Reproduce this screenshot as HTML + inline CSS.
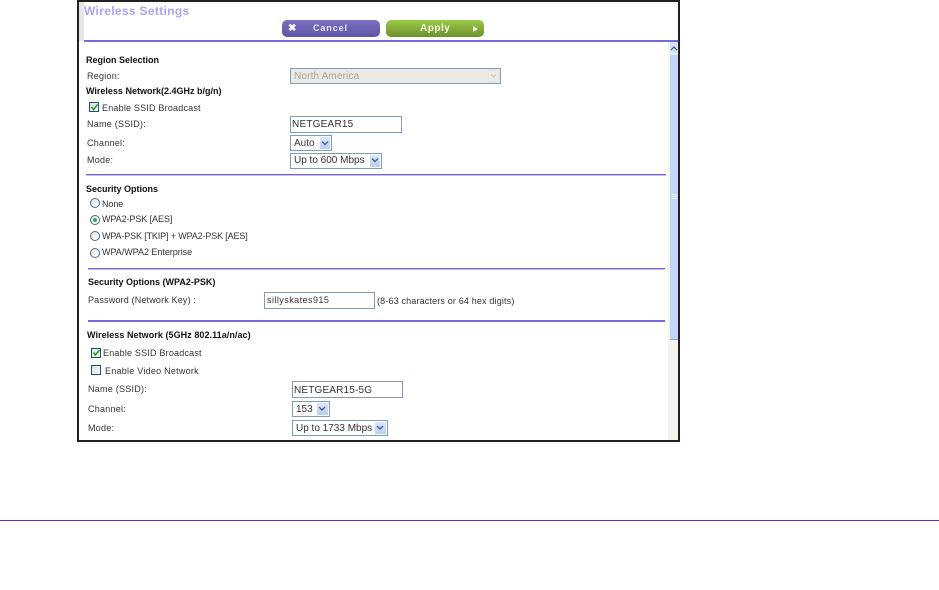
<!DOCTYPE html>
<html><head><meta charset="utf-8">
<style>
html,body{margin:0;padding:0;background:#fff}
body{width:939px;height:590px;overflow:hidden;position:relative;font-family:"Liberation Sans",sans-serif}
div,span.a{position:absolute;box-sizing:border-box}
.t{font-size:9px;line-height:12px;height:12px;color:#333;white-space:nowrap;letter-spacing:.25px}
.s{letter-spacing:-.08px}
.b{font-size:9px;line-height:12px;height:12px;color:#111;font-weight:bold;white-space:nowrap;letter-spacing:0}
.l{background:linear-gradient(#6f63dc 0,#6f63dc 50%,#c4bff2 50%,#c4bff2 100%)}
.i{border:1px solid #7f9db9;background:#fff;font-size:10px;color:#333;white-space:nowrap;padding-left:3px;letter-spacing:0}
.ar{background:linear-gradient(#dbe6fb,#b9cdf6);border:1px solid #fff;outline:0}
.cb{width:10px;height:10px;border:1px solid #1c5180;background:linear-gradient(135deg,#dcdcd7,#fff)}
.rd{width:10px;height:10px;border:1px solid #4a6a90;border-radius:50%;background:linear-gradient(135deg,#e4e4de,#fff)}
svg{position:absolute;left:0;top:0}
</style></head><body>
<div style="left:77px;top:0;width:603px;height:442px;border:2px solid #231f20"></div>
<div style="left:79px;top:2px;width:5px;height:39px;background:#e6e6e6"></div>

<div style="left:84px;top:4px;font-size:12px;line-height:14px;font-weight:bold;color:#aba4f2;white-space:nowrap;letter-spacing:.33px">Wireless Settings</div>

<div style="left:282px;top:20px;width:98px;height:17px;border-radius:5px;background:linear-gradient(#7a70c0,#5f56a6);color:#e9e8f6;font-size:9px;font-weight:bold;line-height:17px;letter-spacing:.9px;padding-left:31px">Cancel</div>
<div style="left:288px;top:23px;color:#fff;font-size:10px;font-weight:bold;line-height:11px">✖</div>
<div style="left:386px;top:20px;width:98px;height:17px;border-radius:5px;background:linear-gradient(#9bcb45,#6d8f30);color:#f1f6e4;font-size:10px;font-weight:bold;line-height:17px;letter-spacing:.5px;padding-left:34px">Apply</div>
<div style="left:473px;top:26px;width:0;height:0;border-left:5px solid #eef5dd;border-top:3px solid transparent;border-bottom:3px solid transparent"></div>

<div class="l" style="left:84px;top:40px;width:594px;height:2px;background:#7468dc"></div>

<!-- scrollbar -->
<div style="left:668px;top:42px;width:10px;height:398px;background:#f4f3ee"></div>
<div style="left:670px;top:42px;width:8px;height:298px;background:#c3d5fb"></div>
<div style="left:670px;top:42px;width:8px;height:11px;background:#d5e2fb"></div>
<div style="left:670px;top:53px;width:8px;height:2px;background:#eef3fd"></div>
<div style="left:670px;top:339px;width:8px;height:1px;background:#8aa5cf"></div>
<div style="left:672px;top:194px;width:5px;height:1px;background:#eef3fd"></div>
<div style="left:672px;top:196px;width:5px;height:1px;background:#eef3fd"></div>
<div style="left:672px;top:198px;width:5px;height:1px;background:#eef3fd"></div>
<svg width="939" height="590" style="z-index:2;pointer-events:none">
<path d="M671 50 L674 47 L677 50" fill="none" stroke="#4d6185" stroke-width="1.3"/>
<path d="M91.500 107 L93.500 109.500 L97.500 104.500" fill="none" stroke="#21a121" stroke-width="1.6"/>
<path d="M93.500 352.500 L95.500 355 L99.500 350" fill="none" stroke="#21a121" stroke-width="1.6"/>
</svg>

<div class="b" style="left:86px;top:54px">Region Selection</div>
<div class="t" style="left:87px;top:70px">Region:</div>
<div style="left:290px;top:68px;width:211px;height:16px;border:1px solid #7f9db9;background:#ebe9e3;color:#a5a59e;font-size:10px;line-height:15px;padding-left:3px;letter-spacing:.15px">North America</div>
<div style="left:488px;top:70px;width:11px;height:12px;background:#eeece6;border:1px solid #e4e2dc"></div>
<svg width="939" height="590" style="z-index:2"><path d="M491 74.500 L493.500 77 L496 74.500" fill="none" stroke="#c9c8c0" stroke-width="1.4"/></svg>

<div class="b" style="left:86px;top:85px">Wireless Network(2.4GHz b/g/n)</div>
<div class="cb" style="left:89px;top:102px"></div>
<div class="t" style="left:102px;top:102px;letter-spacing:.2px">Enable SSID Broadcast</div>
<div class="t" style="left:87px;top:118px">Name (SSID):</div>
<div class="i" style="left:290px;top:116px;width:112px;height:17px;line-height:15px;padding-left:1px;letter-spacing:.22px">NETGEAR15</div>
<div class="t" style="left:87px;top:137px">Channel:</div>
<div class="i" style="left:290px;top:135px;width:42px;height:16px;line-height:15px">Auto</div>
<div class="ar" style="left:319px;top:136px;width:12px;height:14px"></div>
<div class="t" style="left:87px;top:154px">Mode:</div>
<div class="i" style="left:290px;top:153px;width:92px;height:16px;line-height:14px">Up to 600 Mbps</div>
<div class="ar" style="left:369px;top:154px;width:12px;height:14px"></div>
<svg width="939" height="590" style="z-index:2" fill="none" stroke="#4d6185" stroke-width="1.4">
<path d="M322 141.500 L325 144.500 L328 141.500"/>
<path d="M372 158.500 L375 161.500 L378 158.500"/>
<path d="M319 407 L322 410 L325 407"/>
<path d="M377 426 L380 429 L383 426"/>
</svg>

<div class="l" style="left:86px;top:174px;width:580px;height:2px"></div>

<div class="b" style="left:86px;top:183px">Security Options</div>
<div class="rd" style="left:90px;top:198px"></div>
<div class="t s" style="left:102px;top:198px">None</div>
<div class="rd" style="left:90px;top:215px"></div>
<div style="left:93px;top:218px;width:4px;height:4px;border-radius:50%;background:#2fb24a"></div>
<div class="t s" style="left:102px;top:213px">WPA2-PSK [AES]</div>
<div class="rd" style="left:90px;top:231px"></div>
<div class="t s" style="left:102px;top:230px;letter-spacing:-.14px">WPA-PSK [TKIP] + WPA2-PSK [AES]</div>
<div class="rd" style="left:90px;top:248px"></div>
<div class="t s" style="left:102px;top:246px;letter-spacing:-.03px">WPA/WPA2 Enterprise</div>

<div class="l" style="left:88px;top:268px;width:577px;height:2px"></div>

<div class="b" style="left:88px;top:276px">Security Options (WPA2-PSK)</div>
<div class="t" style="left:88px;top:294px;letter-spacing:.17px">Password (Network Key) :</div>
<div class="i" style="left:264px;top:292px;width:111px;height:17px;line-height:15px;font-size:9px;padding-left:2px;letter-spacing:.45px">sillyskates915</div>
<div class="t" style="left:377px;top:295px;letter-spacing:.16px">(8-63 characters or 64 hex digits)</div>

<div class="l" style="left:88px;top:320px;width:577px;height:2px;background:#7468dc"></div>

<div class="b" style="left:87px;top:329px;letter-spacing:.06px">Wireless Network (5GHz 802.11a/n/ac)</div>
<div class="cb" style="left:91px;top:348px"></div>
<div class="t" style="left:103px;top:347px;letter-spacing:.2px">Enable SSID Broadcast</div>
<div class="cb" style="left:91px;top:365px"></div>
<div class="t" style="left:105px;top:365px">Enable Video Network</div>
<div class="t" style="left:88px;top:383px">Name (SSID):</div>
<div class="i" style="left:292px;top:381px;width:111px;height:17px;line-height:17px;padding-left:1px;letter-spacing:.17px">NETGEAR15-5G</div>
<div class="t" style="left:88px;top:403px">Channel:</div>
<div class="i" style="left:292px;top:401px;width:38px;height:16px;line-height:16px">153</div>
<div class="ar" style="left:316px;top:402px;width:13px;height:14px"></div>
<div class="t" style="left:88px;top:422px">Mode:</div>
<div class="i" style="left:292px;top:420px;width:96px;height:16px;line-height:16px">Up to 1733 Mbps</div>
<div class="ar" style="left:374px;top:421px;width:13px;height:14px"></div>

<div style="left:0;top:520px;width:939px;height:1px;background:#6a2c9e"></div>
</body></html>
